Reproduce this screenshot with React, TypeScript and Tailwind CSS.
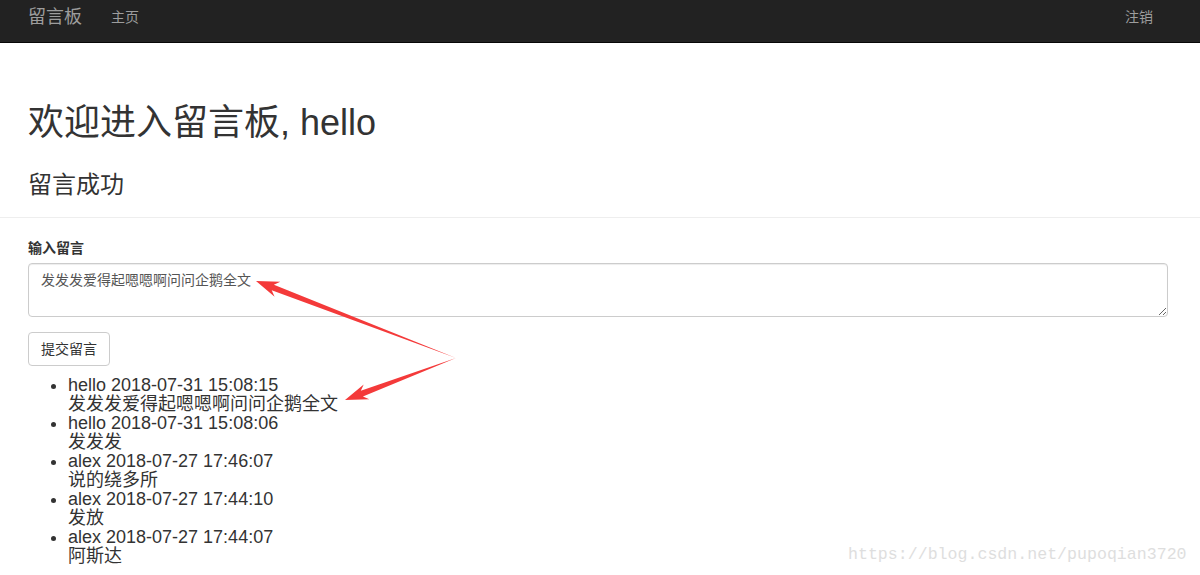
import React from "react";

type P = [number, number];

function arrowPoints(tail: P, tip: P, bodyW = 6, headL = 21, headW = 16): string {
  const dx = tip[0] - tail[0];
  const dy = tip[1] - tail[1];
  const len = Math.hypot(dx, dy);
  const ux = dx / len;
  const uy = dy / len;
  const px = -uy;
  const py = ux;
  const bx = tip[0] - ux * headL;
  const by = tip[1] - uy * headL;
  const jx = bx + ux * 3;
  const jy = by + uy * 3;
  const pts: P[] = [
    tail,
    [jx + (px * bodyW) / 2, jy + (py * bodyW) / 2],
    [bx - ux * 2 + (px * headW) / 2, by - uy * 2 + (py * headW) / 2],
    tip,
    [bx - ux * 2 - (px * headW) / 2, by - uy * 2 - (py * headW) / 2],
    [jx - (px * bodyW) / 2, jy - (py * bodyW) / 2],
  ];
  return pts.map((p) => `${p[0].toFixed(1)},${p[1].toFixed(1)}`).join(" ");
}

const messages = [
  { head: "hello 2018-07-31 15:08:15", body: "发发发爱得起嗯嗯啊问问企鹅全文" },
  { head: "hello 2018-07-31 15:08:06", body: "发发发" },
  { head: "alex 2018-07-27 17:46:07", body: "说的绕多所" },
  { head: "alex 2018-07-27 17:44:10", body: "发放" },
  { head: "alex 2018-07-27 17:44:07", body: "阿斯达" },
];

export default function App() {
  const font = {
    fontFamily:
      '"Liberation Sans", Arial, "Noto Sans CJK SC", sans-serif',
  };
  return (
    <div
      className="relative w-[1200px] h-[575px] overflow-hidden bg-white text-[#333]"
      style={font}
    >
      {/* Navbar */}
      <nav className="h-[43px] bg-[#222] border-b border-[#080808] flex items-center pl-[28px] pr-[47px] text-[#9d9d9d]">
        <span className="text-[18px] leading-[20px] -mt-[8px]">留言板</span>
        <span className="text-[14px] leading-[20px] ml-[29px] -mt-[8px]">主页</span>
        <span className="text-[14px] leading-[20px] ml-auto -mt-[8px]">注销</span>
      </nav>

      {/* Header */}
      <div className="pl-[28px] pr-[32px]">
        <h1 className="mt-[60px] text-[36px] leading-[40px] font-normal">
          欢迎进入留言板, hello
        </h1>
        <h3 className="mt-[29px] text-[24px] leading-[26px] font-normal">
          留言成功
        </h3>
      </div>
      <hr className="mt-[19px] border-t border-[#eee]" />

      <div className="pl-[28px] pr-[32px]">
        <label className="block mt-[20px] text-[14px] leading-[20px] font-bold">
          输入留言
        </label>
        <textarea
          className="block mt-[5px] w-full h-[54px] border border-[#ccc] rounded-[4px] px-[12px] py-[6px] text-[14px] leading-[20px] text-[#555] shadow-[inset_0_1px_1px_rgba(0,0,0,0.075)] outline-none"
          style={font}
          defaultValue="发发发爱得起嗯嗯啊问问企鹅全文"
        />
        <button className="mt-[15px] h-[34px] px-[12px] border border-[#ccc] rounded-[4px] bg-white text-[14px] leading-[20px] text-[#333]">
          提交留言
        </button>
        <ul className="mt-[10px] list-disc pl-[40px] text-[18px] leading-[19px]">
          {messages.map((m, i) => (
            <li key={i}>
              {m.head}
              <br />
              {m.body}
            </li>
          ))}
        </ul>
      </div>

      {/* Annotation arrows */}
      <svg
        className="absolute left-0 top-0 pointer-events-none"
        width="1200"
        height="575"
      >
        <polygon points={arrowPoints([456, 358], [256, 281])} fill="#f43a3a" />
        <polygon points={arrowPoints([456, 358], [345, 400])} fill="#f43a3a" />
      </svg>

      {/* Watermark */}
      <div
        className="absolute left-[848px] top-[544px] text-[16.6px] leading-[22px] text-[#dedede] pointer-events-none"
        style={{ fontFamily: '"Liberation Mono", "Courier New", monospace' }}
      >
        https://blog.csdn.net/pupoqian3720
      </div>
    </div>
  );
}
